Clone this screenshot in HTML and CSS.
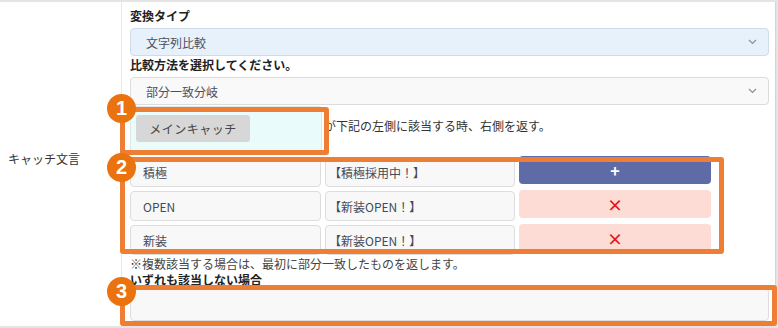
FILE: index.html
```html
<!DOCTYPE html>
<html lang="ja">

<head>
    <meta charset="UTF-8">
    <meta name="viewport" content="width=device-width, initial-scale=1.0">
    <title>キャッチ文言</title>
    <link rel="stylesheet" href="styles.css">
</head>

<body>
    <div class="panel">
        <div class="label-col">キャッチ文言</div>

        <div class="content">
            <div class="field-title">変換タイプ</div>
            <div class="select select-active">
                <span>文字列比較</span>
                <svg class="chevron" width="9" height="6" viewBox="0 0 9 6"><path d="M1 1l3.5 3.5L8 1" fill="none" stroke="#8a8f98" stroke-width="1.2"/></svg>
            </div>

            <div class="field-title">比較方法を選択してください。</div>
            <div class="select">
                <span>部分一致分岐</span>
                <svg class="chevron" width="9" height="6" viewBox="0 0 9 6"><path d="M1 1l3.5 3.5L8 1" fill="none" stroke="#8a8f98" stroke-width="1.2"/></svg>
            </div>

            <div class="source-row">
                <div class="source-box">
                    <span class="chip">メインキャッチ</span>
                </div>
                <div class="source-text">が下記の左側に該当する時、右側を返す。</div>
            </div>

            <div class="rules">
                <div class="rule">
                    <div class="cell">積極</div>
                    <div class="cell cell-bracket">【積極採用中！】</div>
                    <button class="btn btn-add">+</button>
                </div>
                <div class="rule">
                    <div class="cell">OPEN</div>
                    <div class="cell cell-bracket">【新装OPEN！】</div>
                    <button class="btn btn-remove">×</button>
                </div>
                <div class="rule">
                    <div class="cell">新装</div>
                    <div class="cell cell-bracket">【新装OPEN！】</div>
                    <button class="btn btn-remove">×</button>
                </div>
            </div>

            <div class="note">※複数該当する場合は、最初に部分一致したものを返します。</div>
            <div class="field-title field-title-last">いずれも該当しない場合</div>
            <div class="fallback"></div>
        </div>

        <!-- callouts -->
        <div class="frame frame-1"></div>
        <div class="frame frame-2"></div>
        <div class="frame frame-3"></div>
        <div class="badge badge-1">1</div>
        <div class="badge badge-2">2</div>
        <div class="badge badge-3">3</div>
    </div>
</body>

</html>
```

FILE: styles.css
```css
* {
    box-sizing: border-box;
    margin: 0;
    padding: 0;
    font-family: 'Noto Sans CJK JP', 'Noto Sans', sans-serif;
}

body {
    background-color: #e4e4e4;
    color: #333;
    width: 778px;
    height: 328px;
    overflow: hidden;
}

.panel {
    position: relative;
    margin-top: 2px;
    width: 776px;
    height: 324px;
    background: white;
    border-right: 1px solid #d4d4d4;
    display: flex;
}

.label-col {
    width: 122px;
    border-right: 1px solid #e6e6e6;
    display: flex;
    align-items: center;
    padding: 0 0 12px 8px;
    font-size: 12px;
    color: #333;
}

.content {
    flex: 1;
    padding: 5px 6px 0 8px;
}

.field-title {
    font-size: 12px;
    font-weight: bold;
    line-height: 18px;
    margin-bottom: 3px;
    color: #222;
}

.field-title-last {
    margin-bottom: 0;
    line-height: 16px;
}

.select {
    display: flex;
    align-items: center;
    justify-content: space-between;
    height: 28px;
    padding: 0 11px 0 15px;
    background: #f9f9f9;
    border: 1px solid #dcdcdc;
    border-radius: 4px;
    font-size: 12px;
    color: #4a5060;
}

.select-active {
    background: #e7f1fc;
    border-color: #cfdbe8;
}

.source-row {
    display: flex;
    margin-top: 1px;
}

.source-box {
    width: 192px;
    height: 46px;
    padding: 8px 5px;
    background: #eafbfb;
    border: 1px solid #e0e6e6;
    border-radius: 3px;
}

.chip {
    display: inline-flex;
    align-items: center;
    justify-content: center;
    width: 114px;
    height: 27px;
    background: #d7d7d7;
    border-radius: 3px;
    font-size: 12px;
    letter-spacing: 0.5px;
    color: #444;
}

.source-text {
    padding: 11px 0 0 2px;
    font-size: 12px;
    line-height: 18px;
    color: #333;
}

.rules {
    display: flex;
    flex-direction: column;
    gap: 4px;
    margin-top: 5px;
}

.rule {
    display: flex;
    align-items: flex-start;
    gap: 4px;
}

.cell {
    width: 191px;
    height: 30px;
    display: flex;
    align-items: center;
    padding-left: 12px;
    background: #f8f8f8;
    border: 1px solid #dddddd;
    border-radius: 4px;
    font-size: 12px;
    color: #444b58;
}

.cell-bracket {
    width: 190px;
    padding-left: 3px;
}

.btn {
    width: 192px;
    height: 28px;
    margin-top: -1px;
    border: none;
    border-radius: 4px;
    font-size: 16px;
    font-weight: bold;
    line-height: 1;
    cursor: pointer;
}

.btn-add {
    background-color: #5f6ba7;
    color: white;
}

.btn-remove {
    background-color: #fddcd6;
    color: #e8131b;
}

.note {
    margin-top: 1px;
    font-size: 12px;
    line-height: 16px;
    color: #444;
}

.fallback {
    height: 33px;
    background: #f8f8f8;
    border: 1px solid #dddddd;
    border-radius: 4px;
}

.frame {
    position: absolute;
    border: 5px solid #ee7e33;
    border-radius: 3px;
}

.frame-1 {
    left: 120px;
    top: 105px;
    width: 209px;
    height: 48px;
}

.frame-2 {
    left: 120px;
    top: 155px;
    width: 604px;
    height: 97px;
}

.frame-3 {
    left: 120px;
    top: 283px;
    width: 657px;
    height: 41px;
}

.badge {
    position: absolute;
    width: 29px;
    height: 29px;
    border-radius: 50%;
    background: #ea730f;
    color: white;
    font-family: 'Liberation Sans', Arial, sans-serif;
    font-size: 20px;
    font-weight: bold;
    display: flex;
    align-items: center;
    justify-content: center;
}

.badge-1 {
    left: 107px;
    top: 92px;
}

.badge-2 {
    left: 107px;
    top: 151px;
}

.badge-3 {
    left: 107px;
    top: 275px;
}
```
